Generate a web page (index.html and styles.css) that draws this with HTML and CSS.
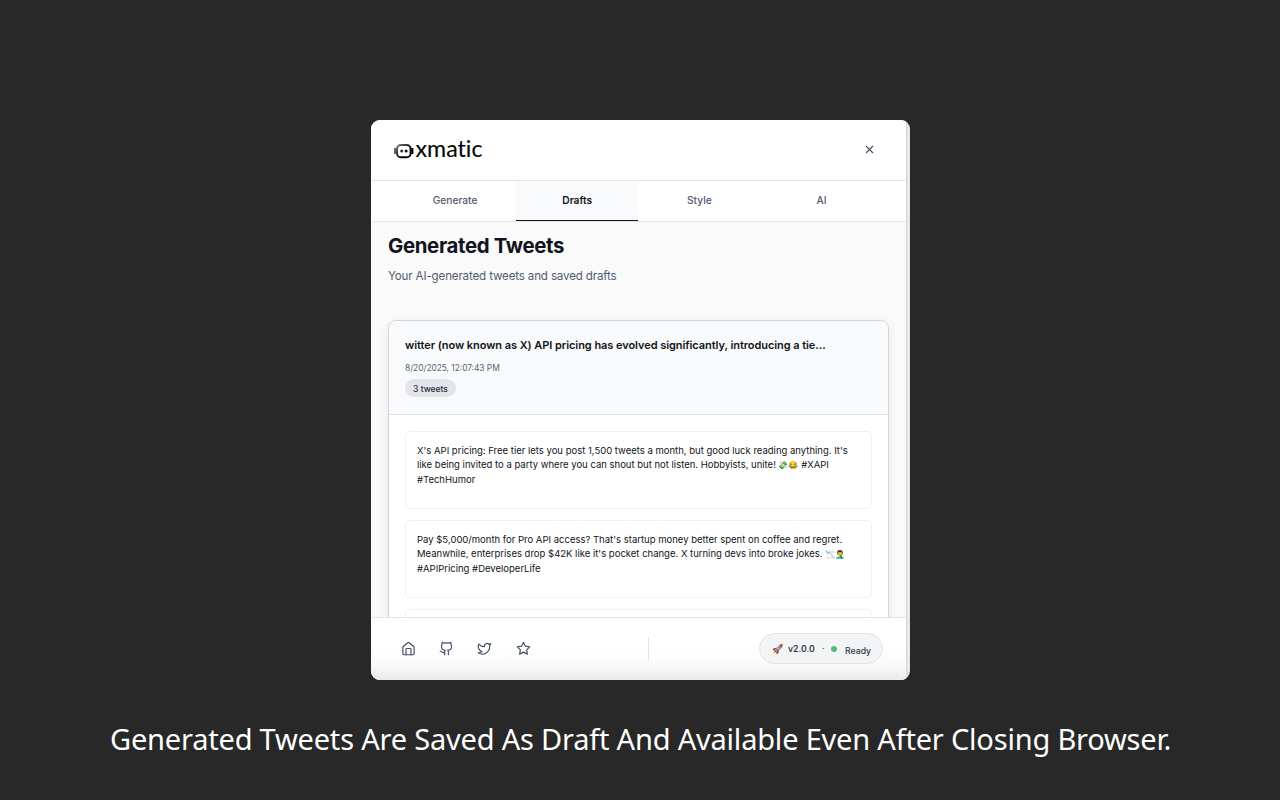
FILE: index.html
```html
<!DOCTYPE html>
<html lang="en">
<head>
<meta charset="utf-8">
<title>xmatic</title>
<link rel="stylesheet" href="styles.css">
</head>
<body>
<main class="panel">
  <div class="screen">
    <header class="header">
      <svg class="logo" width="92" height="32" viewBox="0 0 92 32" role="img">
        <defs><linearGradient id="g" x1="0" y1="0" x2="1" y2="1"><stop offset="0" stop-color="#777"/><stop offset=".6" stop-color="#080808"/></linearGradient></defs>
        <rect x="4" y="12" width="13.600" height="12.200" rx="3.800" fill="none" stroke="url(#g)" stroke-width="2"/>
        <path d="M2 15v6" stroke="#666" stroke-width="2"/><path d="M19.300 15v6" stroke="#080808" stroke-width="2.200"/>
        <circle cx="8.700" cy="18" r="1.500" fill="#333"/><circle cx="13.100" cy="18" r="1.500" fill="#111"/>
        <text class="wordmark" x="22.500" y="24.300" textLength="67" lengthAdjust="spacingAndGlyphs">xmatic</text>
      </svg>
      <svg class="close" width="9" height="9" viewBox="0 0 9 9"><path d="M1 1l7 7M8 1L1 8"/></svg>
    </header>
    <nav class="tabs">
      <a class="tab">Generate</a><a class="tab tab-active">Drafts</a><a class="tab">Style</a><a class="tab">AI</a>
    </nav>
    <section class="content">
      <h1 class="title">Generated Tweets</h1>
      <p class="subtitle">Your AI-generated tweets and saved drafts</p>
      <article class="card">
        <div class="card-head">
          <h2 class="card-title">witter (now known as X) API pricing has evolved significantly, introducing a tie...</h2>
          <div class="date">8/20/2025, 12:07:43 PM</div>
          <span class="count">3 tweets</span>
        </div>
        <div class="card-body">
          <div class="tweet">X's API pricing: Free tier lets you post 1,500 tweets a month, but good luck reading anything. It's<br>like being invited to a party where you can shout but not listen. Hobbyists, unite! <span class="emoji">💸😂</span> #XAPI<br>#TechHumor</div>
          <div class="tweet">Pay $5,000/month for Pro API access? That's startup money better spent on coffee and regret.<br>Meanwhile, enterprises drop $42K like it's pocket change. X turning devs into broke jokes. <span class="emoji">📉🤦‍♂️</span><br>#APIPricing #DeveloperLife</div>
          <div class="tweet"></div>
        </div>
      </article>
    </section>
    <footer class="footer">
      <div class="links">
        <svg class="icon" viewBox="0 0 24 24"><path d="M3 10.200a2 2 0 0 1 .7-1.500l7-6a2 2 0 0 1 2.600 0l7 6a2 2 0 0 1 .7 1.500V20a2 2 0 0 1-2 2H5a2 2 0 0 1-2-2z"/><path d="M8 22v-9a1 1 0 0 1 1-1h6a1 1 0 0 1 1 1v9"/></svg>
        <svg class="icon" viewBox="0 0 24 24"><path d="M15 22v-4a4.800 4.800 0 0 0-1-3.500c3 0 6-2 6-5.500.08-1.250-.27-2.480-1-3.500.28-1.150.28-2.350 0-3.500 0 0-1 0-3 1.500-2.640-.5-5.360-.5-8 0C6 2 5 2 5 2c-.3 1.150-.3 2.350 0 3.500A5.400 5.400 0 0 0 4 9c0 3.500 3 5.500 6 5.500-.39.490-.68 1.050-.85 1.650S8.930 17.380 9 18v4"/><path d="M9 18c-4.510 2-5-2-7-2"/></svg>
        <svg class="icon" viewBox="0 0 24 24"><path d="M22 4s-.7 2.100-2 3.400c1.600 10-9.400 17.300-18 11.600 2.200.1 4.400-.6 6-2C3 15.500.5 9.600 3 5c2.200 2.600 5.600 4.100 9 4-.9-4.200 4-6.600 7-3.800 1.100 0 3-1.200 3-1.200z"/></svg>
        <svg class="icon" viewBox="0 0 24 24"><path d="M12 2l3.100 6.300 6.900 1-5 4.900 1.200 6.800-6.200-3.200L5.800 21 7 14.200l-5-4.900 6.900-1z"/></svg>
      </div>
      <div class="divider"></div>
      <div class="status"><span class="rocket">🚀</span><span class="version">v2.0.0</span><span class="sep">·</span><span class="dot"></span><span class="ready">Ready</span></div>
    </footer>
  </div>
</main>
<p class="caption">Generated Tweets Are Saved As Draft And Available Even After Closing Browser.</p>
</body>
</html>
```
FILE: styles.css
```css
* { box-sizing: border-box; }
body { margin: 0; height: 800px; overflow: hidden; background: #282828; font-family: Inter, "Liberation Sans", sans-serif; color: #111420; padding-top: 120px; }
.panel { width: 539px; height: 560px; margin-left: 371px; border-radius: 9px; background: #e9e8e2; overflow: hidden; }
.screen { width: 536px; height: 560px; background: #fff; border-right: 1px solid #d5d5d3; display: flex; flex-direction: column; }
.header { height: 61px; flex: none; border-bottom: 1px solid #e3e4ea; display: flex; align-items: center; justify-content: space-between; padding: 0 32px 2px 22px; }
.logo { overflow: visible; }
.wordmark { font: 24px Lato, sans-serif; font-variant-ligatures: none; fill: #080808; stroke: #080808; stroke-width: .15; }
.close { fill: none; stroke: #475067; stroke-width: 1.1; }
.tabs { height: 41px; flex: none; display: flex; padding: 0 23.4px 0 23px; border-bottom: 1px solid #e5e6e9; }
.tab { flex: 1; text-align: center; font-size: 10.2px; line-height: 39px; font-weight: 500; color: #51596c; }
.tab-active { background: linear-gradient(#15151c, #15151c) bottom / 100% 1.6px no-repeat #f8fafc; color: #111420; font-weight: 600; height: 40.4px; }
.content { flex: 1; min-height: 0; overflow: hidden; background: #fafafa; padding: 10px 17px 0; }
.title { margin: 0; font-size: 20.4px; line-height: 28px; font-weight: 700; letter-spacing: -.35px; }
.subtitle { margin: 8px 0 0; font-size: 11.6px; line-height: 17px; color: #535c70; letter-spacing: -.16px; }
.card { margin-top: 35px; width: 501px; height: 420px; border: 1px solid #d2d5dc; border-radius: 8px; background: #fff; overflow: hidden; box-shadow: 0 3px 12px rgba(0,0,0,.07); }
.card-head { height: 94px; background: #f8fafc; border-bottom: 1px solid #e2e5ea; padding: 16px; }
.card-title { margin: 0; font-size: 11px; line-height: 16px; font-weight: 600; white-space: nowrap; letter-spacing: -.06px; }
.date { margin-top: 9px; font-size: 8.3px; line-height: 13px; color: #5b6273; }
.count { display: block; width: 51px; margin-top: 4px; height: 18px; border-radius: 9px; background: #e4e5eb; font-size: 8.5px; line-height: 20px; font-weight: 500; text-align: center; color: #252c3b; }
.card-body { padding: 16px; display: grid; gap: 11px; }
.tweet { width: 467px; height: 78px; border: 1px solid #f0f1f3; border-radius: 5px; padding: 11.6px 11px 0; font-size: 9.5px; line-height: 14.5px; white-space: nowrap; }
.emoji { font-family: "Noto Color Emoji", sans-serif; font-size: 8px; line-height: 1; }
.footer { height: 63px; flex: none; border-top: 1px solid #e2e3e8; background: linear-gradient(#fff 0 45%, #fbfbfb 70%, #f4f4f4 85%, #e9e9e9); display: flex; align-items: center; padding: 0 23px 1px 30px; }
.links { display: flex; gap: 23.2px; width: 247px; }
.icon { width: 15px; height: 15px; flex: none; fill: none; stroke: #475067; stroke-width: 1.9; stroke-linecap: round; stroke-linejoin: round; }
.divider { width: 1px; height: 23px; background: #e3e3e6; }
.status { margin-left: auto; width: 124px; height: 31px; border: 1px solid #e1e3e8; border-radius: 16px; background: #f3f4f6; display: flex; align-items: center; padding-left: 12px; font-size: 8.7px; color: #303749; }
.rocket { width: 16px; font: 9px "Noto Color Emoji", sans-serif; }
.version { width: 34px; font-weight: 600; }
.sep { width: 9px; }
.dot { width: 6px; height: 6px; border-radius: 50%; background: #5bb87a; }
.ready { margin: 4px 0 0 8px; font-weight: 500; }
.caption { margin: 38px 0 0 110px; font: 29px/42px "Noto Sans", sans-serif; color: #fff; white-space: nowrap; letter-spacing: -.2px; }
```
